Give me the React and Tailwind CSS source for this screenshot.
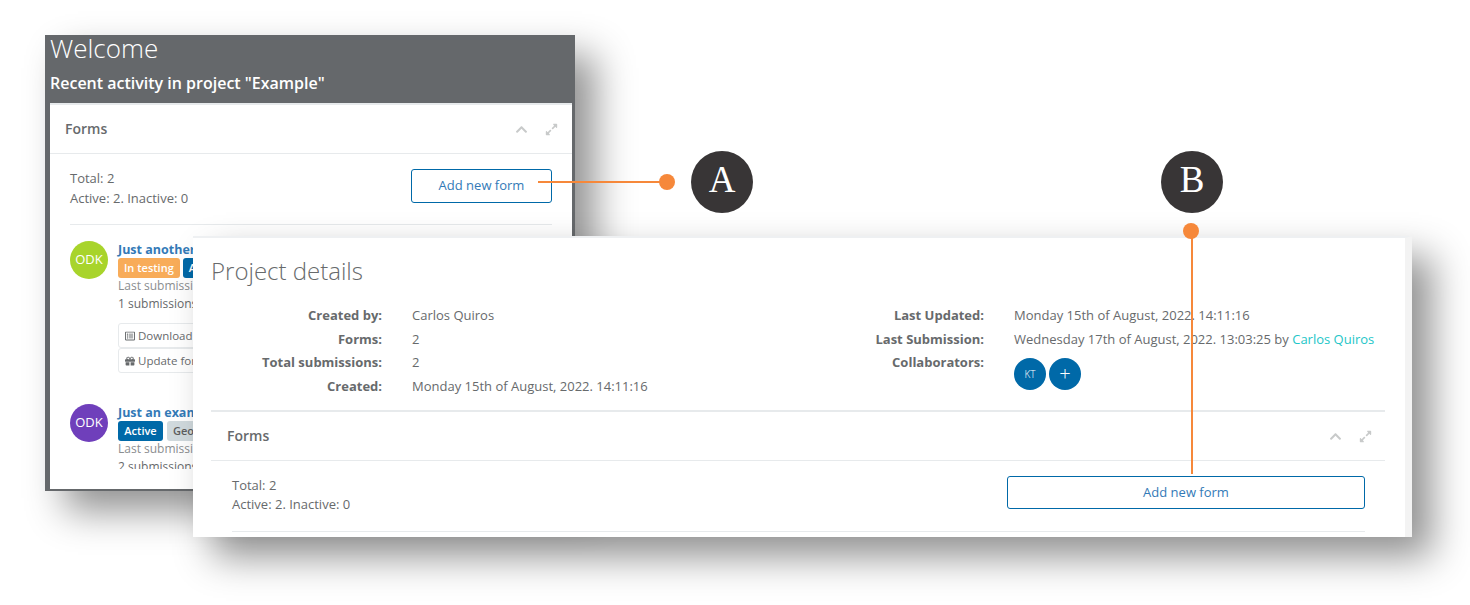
import { FaChevronUp, FaExpandAlt, FaGift, FaRegListAlt } from "react-icons/fa";

const SANS = "font-['Open_Sans',sans-serif]";

function PanelHeader({ className = "" }) {
  return (
    <div className={`flex items-center justify-between border-b border-[#e7eaec] ${className}`}>
      <h5 className="-mt-[2px] text-[14px] font-semibold text-[#676a6c]">Forms</h5>
      <div className="flex items-center gap-[17px] text-[#c8caca]">
        <FaChevronUp className="h-[13px] w-[13px]" />
        <FaExpandAlt className="h-[13px] w-[13px]" />
      </div>
    </div>
  );
}

function Totals({ leading = "leading-[20px]" }) {
  return (
    <div className={`text-[13px] text-[#676a6c] ${leading}`}>
      <div>Total: 2</div>
      <div>Active: 2. Inactive: 0</div>
    </div>
  );
}

function AddButton({ className = "" }) {
  return (
    <button className={`rounded-[3px] border border-[#0069a8] bg-white text-[13px] text-[#337ab7] ${className}`}>
      Add new form
    </button>
  );
}

function Badge({ children, className = "" }) {
  return (
    <span className={`flex h-[20px] items-center rounded-[3px] px-[6px] text-[11px] font-semibold ${className}`}>
      {children}
    </span>
  );
}

function FormItem({ color, title, badges, submissions, children }) {
  return (
    <div className="flex gap-[10px]">
      <div className={`flex h-[38px] w-[38px] shrink-0 items-center justify-center rounded-full text-[13px] text-white ${color}`}>
        ODK
      </div>
      <div className="whitespace-nowrap text-[12px] text-[#8b8e90]">
        <div className="h-[17px] text-[12.5px] leading-[17px] font-bold text-[#337ab7]">{title}</div>
        <div className="flex gap-[3px]">{badges}</div>
        <div className="-mt-[1px] h-[18px] leading-[17px]">Last submission: 2022</div>
        <div className="h-[18px] leading-[18px] text-[#676a6c]">{submissions}</div>
        {children}
      </div>
    </div>
  );
}

function SmallButton({ icon, children }) {
  return (
    <div className="flex h-[25px] w-[120px] items-center gap-[3px] rounded-[3px] border border-[#e7eaec] bg-white pl-[6px] text-[11.5px] text-[#676a6c]">
      {icon}
      {children}
    </div>
  );
}

function DetailRow({ label, children, className = "" }) {
  return (
    <div className={`flex gap-[30px] text-[13px] leading-[20px] ${className}`}>
      <div className="w-[171px] shrink-0 text-right font-bold text-[#676a6c]">{label}</div>
      <div className="text-[#676a6c]">{children}</div>
    </div>
  );
}

function ActivityWindow() {
  return (
    <div className="absolute left-[45px] top-[35px] flex h-[456px] w-[530px] flex-col bg-[#65686b] pb-[2px] pl-[5px] pr-[3px] shadow-[20px_20px_36px_rgba(0,0,0,0.43)]">
      <h1 className="-mt-[1px] h-[29px] text-[26px] leading-[28px] font-light text-white">Welcome</h1>
      <h3 className="mt-[8px] h-[32px] text-[16px] leading-[24px] font-semibold text-white">
        Recent activity in project "Example"
      </h3>
      <div className="flex-1 border-t-2 border-[#e7eaec] bg-white">
        <PanelHeader className="h-[49px] pl-[15px] pr-[14px]" />
        <div className="h-[315px] overflow-hidden px-[20px]">
          <div className="flex h-[71px] items-center justify-between border-b border-[#e7eaec]">
            <div className="-mt-[3px]"><Totals /></div>
            <AddButton className="-mt-[6px] h-[34px] w-[141px]" />
          </div>
          <div className="pt-[16px]">
            <FormItem
              color="bg-[#a8d42b]"
              title="Just another form"
              submissions="1 submissions"
              badges={
                <>
                  <Badge className="bg-[#f8ac59] text-white">In testing</Badge>
                  <Badge className="bg-[#0069a8] text-white">Active</Badge>
                </>
              }
            >
              <div className="mt-[10px] flex flex-col">
                <SmallButton icon={<FaRegListAlt className="h-[10px] w-[10px]" />}>Download</SmallButton>
                <SmallButton icon={<FaGift className="h-[10px] w-[10px]" />}>Update form</SmallButton>
              </div>
            </FormItem>
            <div className="mt-[31px]">
              <FormItem
                color="bg-[#6f3fbb]"
                title="Just an example"
                submissions="2 submissions"
                badges={
                  <>
                    <Badge className="w-[45px] justify-center bg-[#0069a8] text-white">Active</Badge>
                    <Badge className="ml-[1px] bg-[#d1dade] text-[#5e5e5e]">Geo</Badge>
                  </>
                }
              />
            </div>
          </div>
        </div>
      </div>
    </div>
  );
}

function ProjectWindow() {
  return (
    <div className="absolute left-[193px] top-[236px] h-[301px] w-[1219px] overflow-hidden border-t-2 border-r-[7px] border-[#eef0f2] border-r-[#f3f3f3] bg-white pl-[18px] pr-[20px] shadow-[20px_20px_36px_rgba(0,0,0,0.43)]">
      <h2 className="mt-[18px] h-[30px] text-[24px] leading-[30px] font-light text-[#676a6c]">Project details</h2>
      <div className="mt-[19px] flex h-[105px]">
        <div className="w-[602px]">
          <DetailRow label="Created by:" className="h-[24px]">Carlos Quiros</DetailRow>
          <DetailRow label="Forms:" className="h-[23px]">2</DetailRow>
          <DetailRow label="Total submissions:" className="h-[24px]">2</DetailRow>
          <DetailRow label="Created:">Monday 15th of August, 2022. 14:11:16</DetailRow>
        </div>
        <div>
          <DetailRow label="Last Updated:" className="h-[24px]">Monday 15th of August, 2022. 14:11:16</DetailRow>
          <DetailRow label="Last Submission:" className="h-[23px]">
            Wednesday 17th of August, 2022. 13:03:25 by <span className="text-[#23c6c8]">Carlos Quiros</span>
          </DetailRow>
          <DetailRow label="Collaborators:">
            <div className="flex gap-[3px] pt-[6px]">
              <div className="flex h-[32px] w-[32px] items-center justify-center rounded-full bg-[#0069a8] text-[10px] font-light text-white">KT</div>
              <div className="flex h-[32px] w-[32px] items-center justify-center rounded-full bg-[#0069a8] text-[20px] font-light text-white">+</div>
            </div>
          </DetailRow>
        </div>
      </div>
      <div className="border-t-2 border-[#e7eaec]">
        <PanelHeader className="h-[49px] pl-[16px] pr-[13px]" />
        <div className="ml-[21px] mr-[20px] flex h-[71px] justify-between border-b border-[#e7eaec] pt-[15px]">
          <Totals leading="leading-[19px]" />
          <AddButton className="h-[33px] w-[358px]" />
        </div>
      </div>
    </div>
  );
}

function Callouts() {
  return (
    <>
      <div className="absolute left-[538px] top-[181px] h-[2px] w-[130px] bg-[#f6883a]" />
      <div className="absolute left-[659px] top-[174px] h-[16px] w-[16px] rounded-full bg-[#f6883a]" />
      <div className="absolute left-[691px] top-[151px] flex h-[62px] w-[62px] items-center justify-center rounded-full bg-[#383536] pb-[4px] font-['Liberation_Serif',serif] text-[37px] text-white">
        A
      </div>
      <div className="absolute left-[1161px] top-[151px] flex h-[62px] w-[62px] items-center justify-center rounded-full bg-[#383536] pb-[4px] font-['Liberation_Serif',serif] text-[37px] text-white">
        B
      </div>
      <div className="absolute left-[1183px] top-[223px] h-[16px] w-[16px] rounded-full bg-[#f6883a]" />
      <div className="absolute left-[1191px] top-[231px] h-[243px] w-[2px] bg-[#f6883a]" />
    </>
  );
}

export default function App() {
  return (
    <div className={`relative h-[605px] w-[1470px] overflow-hidden bg-white ${SANS}`}>
      <ActivityWindow />
      <ProjectWindow />
      <Callouts />
    </div>
  );
}
